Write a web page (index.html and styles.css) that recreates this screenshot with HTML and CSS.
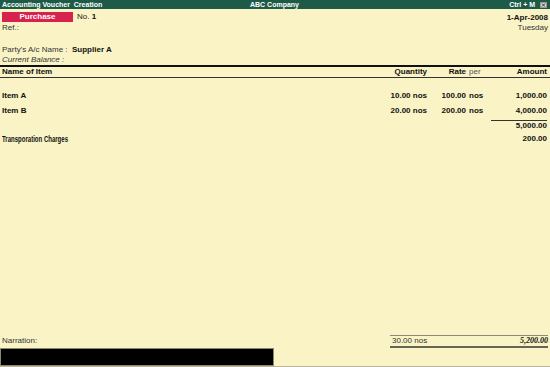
FILE: index.html
```html
<!DOCTYPE html>
<html>
<head>
<meta charset="utf-8">
<link rel="stylesheet" href="styles.css">
</head>
<body>
<div class="screen">
  <div class="titlebar">
    <span class="tb-left">Accounting Voucher&nbsp; Creation</span>
    <span class="tb-center">ABC Company</span>
    <span class="tb-right"><span>Ctrl + M</span><span class="close"><svg width="7" height="6" viewBox="0 0 7 6"><rect x="0.5" y="0.5" width="6" height="5" fill="#d9d9d0" stroke="#9a9a90"/><path d="M2 1.5 L5 4.5 M5 1.5 L2 4.5" stroke="#333" stroke-width="1"/></svg></span></span>
  </div>

  <div class="voucher-head">
    <div class="row-type">
      <div class="type-left"><span class="vtype">Purchase</span><span class="vno">No. <b>1</b></span></div>
      <div class="date">1-Apr-2008</div>
    </div>
    <div class="row-ref"><span>Ref.:</span><span>Tuesday</span></div>
    <div class="party"><span>Party's A/c Name :</span>&nbsp; <b>Supplier A</b></div>
    <div class="balance">Current Balance :</div>
  </div>

  <div class="items">
    <div class="grid head">
      <span class="c-name">Name of Item</span>
      <span class="c-qty">Quantity</span>
      <span class="c-rate">Rate</span>
      <span class="c-per per-label">per</span>
      <span class="c-amt">Amount</span>
    </div>
    <div class="grid item first">
      <span class="c-name">Item A</span>
      <span class="c-qty">10.00 nos</span>
      <span class="c-rate">100.00</span>
      <span class="c-per">nos</span>
      <span class="c-amt">1,000.00</span>
    </div>
    <div class="grid item">
      <span class="c-name">Item B</span>
      <span class="c-qty">20.00 nos</span>
      <span class="c-rate">200.00</span>
      <span class="c-per">nos</span>
      <span class="c-amt">4,000.00</span>
    </div>
    <div class="grid subtotal">
      <span class="c-name"></span>
      <span class="c-qty"></span>
      <span class="c-rate"></span>
      <span class="c-per"></span>
      <span class="c-amt sum">5,000.00</span>
    </div>
    <div class="grid charge">
      <span class="c-name"><span class="narrow">Transporation Charges</span></span>
      <span class="c-qty"></span>
      <span class="c-rate"></span>
      <span class="c-per"></span>
      <span class="c-amt">200.00</span>
    </div>
  </div>

  <div class="spacer"></div>

  <div class="footer">
    <div class="narr-label">Narration:</div>
    <div class="totals"><span>30.00 nos</span><span class="grand">5,200.00</span></div>
    <div class="narr-box"></div>
  </div>
</div>
</body>
</html>
```

FILE: styles.css
```css
html, body {
  margin: 0;
  padding: 0;
  background: #f9f3c5;
}

.screen {
  width: 550px;
  height: 367px;
  box-sizing: border-box;
  background: #f9f3c5;
  display: flex;
  flex-direction: column;
  font-family: "Liberation Sans", Arial, sans-serif;
  font-size: 8px;
  color: #222;
  border-bottom: 1px solid #b9b59c;
  overflow: hidden;
}

.titlebar {
  height: 9px;
  line-height: 9px;
  background: #1e5a48;
  color: #fff;
  font-weight: bold;
  font-size: 7px;
  display: grid;
  grid-template-columns: 1fr auto 1fr;
  padding: 0 3px 0 2px;
  white-space: nowrap;
}

.tb-right {
  justify-self: end;
  display: flex;
  align-items: center;
  gap: 5px;
}

.close {
  display: flex;
}

.voucher-head {
  padding: 3px 2px 0 2px;
}

.row-type {
  display: flex;
  justify-content: space-between;
  align-items: center;
  height: 10px;
  line-height: 10px;
}

.type-left {
  display: flex;
  align-items: center;
}

.vtype {
  display: inline-block;
  width: 71px;
  height: 10px;
  background: #d7214f;
  color: #fff;
  font-weight: bold;
  text-align: center;
  line-height: 10px;
}

.vno {
  margin-left: 4px;
  color: #222;
}

.vno b, .date, .party b {
  color: #111;
}

.date {
  font-weight: bold;
  padding-top: 1px;
}

.row-ref {
  display: flex;
  justify-content: space-between;
  margin-top: 1px;
  height: 10px;
  line-height: 10px;
  color: #333;
}

.party {
  margin-top: 12px;
  height: 10px;
  line-height: 10px;
  color: #333;
}

.balance {
  height: 10px;
  line-height: 10px;
  font-style: italic;
  color: #333;
}

.items {
  border-top: 2px solid #111;
}

.grid {
  display: grid;
  grid-template-columns: 1fr 41px 39px 22px 59px;
  padding: 0 3px 0 2px;
  height: 10px;
  line-height: 10px;
  font-weight: bold;
  color: #111;
}

.c-qty, .c-rate, .c-amt {
  text-align: right;
  white-space: nowrap;
}

.c-per {
  padding-left: 3px;
}

.per-label {
  font-weight: normal;
  color: #555;
}

.head {
  border-bottom: 1px solid #333;
}

.item.first {
  margin-top: 13px;
}

.item {
  margin-top: 5px;
}

.subtotal {
  margin-top: 4px;
}

.sum {
  border-top: 1px solid #333;
  margin-left: 3px;
  line-height: 9px;
}

.charge {
  margin-top: 4px;
}

.narrow {
  display: inline-block;
  font-size: 9px;
  transform: scaleX(0.67);
  transform-origin: left center;
  white-space: nowrap;
}

.spacer {
  flex: 1;
}

.footer {
  display: grid;
  grid-template-columns: 274px 1fr 158px;
  grid-template-rows: 13px 18px;
  padding-right: 2px;
}

.narr-label {
  grid-column: 1 / 3;
  grid-row: 1;
  padding-left: 2px;
  padding-top: 1px;
  line-height: 10px;
  color: #333;
}

.totals {
  grid-column: 3;
  grid-row: 1;
  border-top: 1px solid #8c8a76;
  border-bottom: 2px solid #666452;
  display: flex;
  justify-content: space-between;
  line-height: 10px;
  padding-left: 2px;
  color: #333;
}

.grand {
  font-family: "Liberation Serif", "Times New Roman", serif;
  font-weight: bold;
  font-style: italic;
  color: #111;
}

.narr-box {
  grid-column: 1;
  grid-row: 2;
  background: #000;
  border: 1px solid #8a8a6a;
}
```
